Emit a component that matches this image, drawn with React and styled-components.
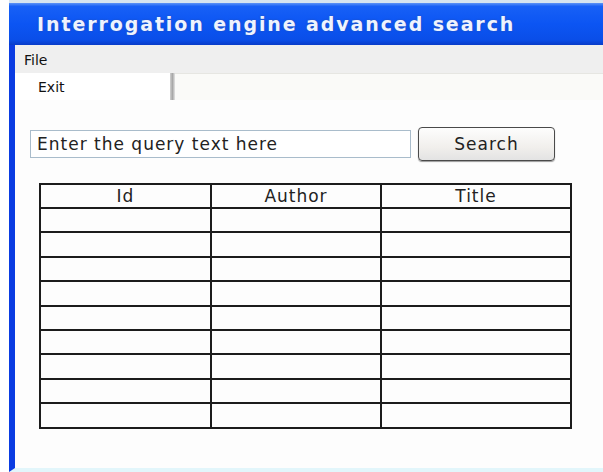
import styled, { createGlobalStyle } from "styled-components";

const GlobalStyle = createGlobalStyle`
    html, body {
        margin: 0;
        padding: 0;
        background: #ffffff;
    }
    body {
        font-family: "DejaVu Sans", Verdana, sans-serif;
    }
`

const Window = styled.div`
    width: 594px;
    height: 472px;
    margin-left: 9px;
    display: flex;
    flex-direction: column;
    border-top: 3px solid #d6e4f0;
    box-sizing: border-box;
`
const TitleBar = styled.div`
    height: 42px;
    flex-shrink: 0;
    display: flex;
    align-items: center;
    padding-left: 28px;
    background: linear-gradient(to bottom, #5c93f7 0%, #1760f6 8%, #0c55f3 50%, #0a4ee8 88%, #083cc8 100%);
    color: #eef3ff;
    font-size: 19px;
    font-weight: bold;
    letter-spacing: 1.9px;
    text-shadow: 0 0 2px #2a4fa8;
`
const Body = styled.div`
    flex: 1;
    display: flex;
    flex-direction: column;
    background: #fdfdfd;
    border-left: 6px solid #0a3ce2;
    border-bottom: 4px solid #e2f6fb;
`
const MenuBar = styled.div`
    height: 28px;
    flex-shrink: 0;
    display: flex;
    align-items: center;
    padding: 2px 0 0 9px;
    box-sizing: border-box;
    background: #efefef;
    font-size: 14px;
    color: #111;
`
const ToolStrip = styled.div`
    height: 27px;
    flex-shrink: 0;
    display: flex;
`
const ToolItem = styled.div`
    width: 132px;
    padding-left: 23px;
    display: flex;
    align-items: center;
    background: #ffffff;
    font-size: 14px;
    color: #111;
`
const ToolSeparator = styled.div`
    width: 5px;
    background: linear-gradient(to right, #d0d0d0, #a8a8a8 50%, #e4e4e4);
`
const ToolRest = styled.div`
    flex: 1;
    background: #fafaf8;
    border-top: 1px solid #e6e6e2;
`
const Content = styled.div`
    padding: 27px 0 0 15px;
    display: flex;
    flex-direction: column;
    gap: 22px;
`
const SearchRow = styled.div`
    display: flex;
    align-items: center;
    gap: 7px;
`
const QueryInput = styled.input`
    width: 381px;
    height: 28px;
    box-sizing: border-box;
    border: 1px solid #a9bccb;
    padding: 0 6px;
    font-family: "DejaVu Sans", Verdana, sans-serif;
    font-size: 17px;
    letter-spacing: 1px;
    color: #222;
    background: #ffffff;
    outline: none;
    &::placeholder {
        color: #222;
    }
`
const SearchButton = styled.button`
    width: 137px;
    height: 34px;
    border: 1px solid #4a4a4a;
    border-radius: 4px;
    background: linear-gradient(to bottom, #fdfdfd, #f1efec 60%, #e3e3e3);
    font-family: "DejaVu Sans", Verdana, sans-serif;
    font-size: 17px;
    letter-spacing: 1px;
    color: #222;
    box-shadow: 0 1px 1px #9a9a9a;
`
const Grid = styled.table`
    margin-left: 9px;
    width: 531px;
    border-collapse: collapse;
    table-layout: fixed;
    border: 2px solid #3a3a3a;
`
const HeadCell = styled.th`
    height: 22px;
    padding: 0;
    font-weight: normal;
    font-size: 17px;
    letter-spacing: 1px;
    color: #222;
    text-align: center;
    border: 2px solid #1c1c1c;
`
const Cell = styled.td`
    height: 22.4px;
    padding: 0;
    border: 2px solid #1c1c1c;
`

const columns = [
    { title: "Id", width: 171 },
    { title: "Author", width: 170 },
    { title: "Title", width: 190 },
];
const rows = Array.from({ length: 9 });

const App = () => {
    return (
        <>
            <GlobalStyle />
            <Window>
                <TitleBar>Interrogation engine advanced search</TitleBar>
                <Body>
                    <MenuBar>File</MenuBar>
                    <ToolStrip>
                        <ToolItem>Exit</ToolItem>
                        <ToolSeparator />
                        <ToolRest />
                    </ToolStrip>
                    <Content>
                        <SearchRow>
                            <QueryInput placeholder="Enter the query text here" />
                            <SearchButton>Search</SearchButton>
                        </SearchRow>
                        <Grid>
                            <colgroup>
                                {columns.map((col) => (
                                    <col key={col.title} style={{ width: col.width }} />
                                ))}
                            </colgroup>
                            <thead>
                                <tr>
                                    {columns.map((col) => (
                                        <HeadCell key={col.title}>{col.title}</HeadCell>
                                    ))}
                                </tr>
                            </thead>
                            <tbody>
                                {rows.map((_, i) => (
                                    <tr key={i}>
                                        {columns.map((col) => (
                                            <Cell key={col.title} />
                                        ))}
                                    </tr>
                                ))}
                            </tbody>
                        </Grid>
                    </Content>
                </Body>
            </Window>
        </>
    );
};

export default App;
